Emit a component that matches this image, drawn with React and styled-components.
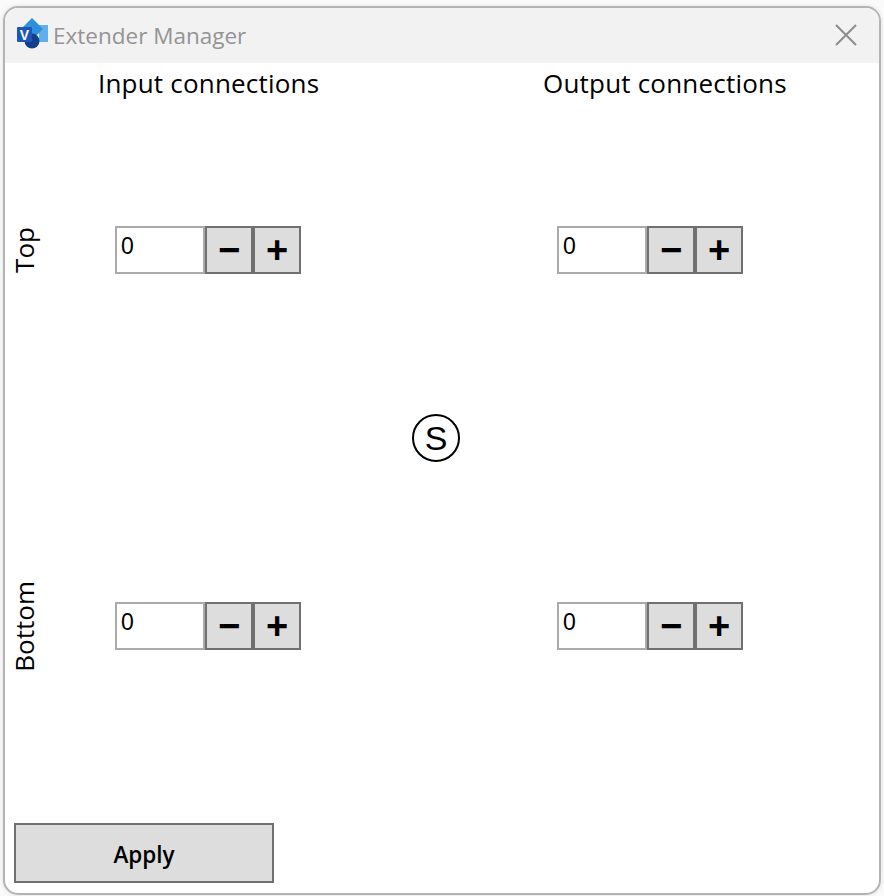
import styled, { createGlobalStyle } from "styled-components";

const GlobalStyle = createGlobalStyle`
  html, body {
    margin: 0;
    background: #fafafa;
  }
  * {
    box-sizing: border-box;
  }
`;

const Page = styled.div`
  width: 884px;
  height: 896px;
  padding: 6px 3px 1px 3px;
`;

const Window = styled.div`
  display: flex;
  flex-direction: column;
  width: 878px;
  height: 889px;
  background: #fff;
  border: 2px solid #b4b4b4;
  border-radius: 15px;
  overflow: hidden;
  box-shadow: 0 0 5px rgba(0, 0, 0, 0.1);
  font-family: "Open Sans", "Noto Sans", sans-serif;
  color: #000;
`;

const TitleBar = styled.div`
  display: flex;
  align-items: center;
  flex-shrink: 0;
  height: 55px;
  padding: 0 22px 0 12px;
  background: #f2f2f2;
`;

const LogoIcon = styled.svg`
  flex-shrink: 0;
  width: 32px;
  height: 32px;
  margin-bottom: 3px;
`;

const TitleText = styled.span`
  margin-left: 4px;
  font-size: 22.5px;
  color: #949494;
`;

const CloseIcon = styled.svg`
  margin-left: auto;
  width: 22px;
  height: 22px;
  margin-bottom: 2px;
`;

const Headers = styled.div`
  display: grid;
  grid-template-columns: 445px 1fr;
  height: 93px;
  padding-left: 93px;
`;

const Heading = styled.div`
  font-size: 26px;
  letter-spacing: 0.2px;
  line-height: 41px;
`;

const Grid = styled.div`
  display: grid;
  grid-template-columns: 110px 186px 256px 186px;
  grid-auto-rows: 188px;
  align-items: center;
`;

const SideLabel = styled.div`
  justify-self: start;
  margin-left: 6px;
  writing-mode: vertical-rl;
  transform: rotate(180deg);
  font-size: 26px;
  line-height: 26px;
`;

const Stepper = styled.div`
  display: flex;
  height: 48px;
`;

const ValueField = styled.div`
  width: 90px;
  padding: 4px 0 0 4px;
  border: 2px solid #ababab;
  font-family: "Liberation Sans", Arial, sans-serif;
  font-size: 23px;
  line-height: 28px;
`;

const StepButton = styled.div`
  display: flex;
  align-items: center;
  justify-content: center;
  width: 48px;
  background: #dddddd;
  border: 2px solid #707070;
  font-family: "Liberation Sans", Arial, sans-serif;
  font-size: 38px;
  font-weight: 700;
  line-height: 1;
`;

const CenterCell = styled.div`
  padding-left: 111px;
`;

const SymbolCircle = styled.div`
  display: flex;
  align-items: center;
  justify-content: center;
  width: 48px;
  height: 48px;
  border: 2px solid #000;
  border-radius: 50%;
  font-family: "Liberation Sans", Arial, sans-serif;
  font-size: 34px;
`;

const Footer = styled.div`
  margin-top: auto;
  padding: 0 0 10px 9px;
`;

const ApplyButton = styled.div`
  display: flex;
  align-items: center;
  justify-content: center;
  width: 260px;
  height: 60px;
  padding-top: 2px;
  background: #dddddd;
  border: 2px solid #707070;
  font-size: 22.5px;
  font-weight: 600;
`;

function VisioLogo() {
  return (
    <LogoIcon viewBox="0 0 32 32">
      <polygon points="22,7 31,7 31,24 22,24" fill="#5fb0ea" />
      <polygon points="15,0 26,11 15,22 4,11" fill="#2f8fdd" />
      <circle cx="15" cy="23" r="7.5" fill="#123f8c" />
      <rect x="0" y="9" width="15" height="15" rx="1" fill="#1c56b8" />
      <text
        x="7.5"
        y="22"
        textAnchor="middle"
        fontFamily="Liberation Sans, Arial, sans-serif"
        fontSize="14"
        fontWeight="700"
        fill="#fff"
      >
        V
      </text>
    </LogoIcon>
  );
}

function NumberStepper() {
  return (
    <Stepper>
      <ValueField>0</ValueField>
      <StepButton>−</StepButton>
      <StepButton>+</StepButton>
    </Stepper>
  );
}

export default function App() {
  return (
    <Page>
      <GlobalStyle />
      <Window>
        <TitleBar>
          <VisioLogo />
          <TitleText>Extender Manager</TitleText>
          <CloseIcon viewBox="0 0 22 22">
            <path d="M1 1 L21 21 M21 1 L1 21" stroke="#8c8c8c" strokeWidth="2" fill="none" />
          </CloseIcon>
        </TitleBar>
        <Headers>
          <Heading>Input connections</Heading>
          <Heading>Output connections</Heading>
        </Headers>
        <Grid>
          <SideLabel>Top</SideLabel>
          <NumberStepper />
          <div />
          <NumberStepper />
          <div />
          <div />
          <CenterCell>
            <SymbolCircle>S</SymbolCircle>
          </CenterCell>
          <div />
          <SideLabel>Bottom</SideLabel>
          <NumberStepper />
          <div />
          <NumberStepper />
        </Grid>
        <Footer>
          <ApplyButton>Apply</ApplyButton>
        </Footer>
      </Window>
    </Page>
  );
}
